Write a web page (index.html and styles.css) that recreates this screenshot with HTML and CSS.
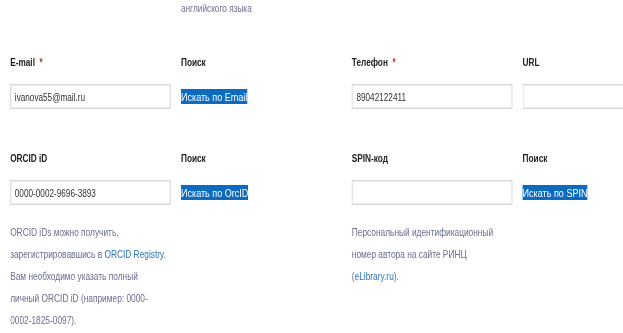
FILE: index.html
```html
<!DOCTYPE html>
<html>
<head>
  <meta charset="utf-8">
  <title>Профиль автора</title>
  <link rel="stylesheet" href="styles.css">
</head>
<body>

  <div class="page">
    <div class="note-row">
      <div></div>
      <div class="note">английского языка</div>
    </div>

    <div class="form-row first">
      <div class="field">
        <label>E-mail <span class="req">*</span></label>
        <input type="text" value="ivanova55@mail.ru">
      </div>
      <div class="field">
        <label>Поиск</label>
        <div class="search"><span class="search-link">Искать по Email</span></div>
      </div>
      <div class="field">
        <label>Телефон <span class="req">*</span></label>
        <input type="text" value="89042122411">
      </div>
      <div class="field">
        <label>URL</label>
        <input type="text" value="">
      </div>
    </div>

    <div class="form-row">
      <div class="field">
        <label>ORCID iD</label>
        <input type="text" value="0000-0002-9696-3893">
        <p class="help">ORCID iDs можно получить, зарегистрировавшись в <a href="#">ORCID Registry</a>. Вам необходимо указать полный личный ORCID iD (например: 0000-<wbr>0002-1825-0097).</p>
      </div>
      <div class="field">
        <label>Поиск</label>
        <div class="search"><span class="search-link">Искать по OrcID</span></div>
      </div>
      <div class="field">
        <label>SPIN-код</label>
        <input type="text" value="">
        <p class="help">Персональный идентификационный номер автора на сайте РИНЦ (<a href="#">eLibrary.ru</a>).</p>
      </div>
      <div class="field">
        <label>Поиск</label>
        <div class="search"><span class="search-link">Искать по SPIN</span></div>
      </div>
    </div>
  </div>

</body>
</html>
```

FILE: styles.css
```css
body {
  margin: 0;
  background-color: #fff;
  font-family: "Liberation Sans", Arial, sans-serif;
  overflow: hidden;
}

/* the source screenshot is squeezed horizontally */
.page {
  width: 800px;
  padding-left: 13px;
  transform: scaleX(0.78);
  transform-origin: 0 0;
}

.note-row,
.form-row {
  display: grid;
  grid-template-columns: repeat(4, 219px);
}

.note {
  font-size: 10.6px;
  line-height: 17px;
  color: #6e7090;
}

.form-row.first {
  margin-top: 38px;
}

.form-row {
  margin-top: 42px;
}

.field label {
  display: block;
  font-size: 10.6px;
  font-weight: bold;
  line-height: 14px;
  color: #222;
  margin-bottom: 15px;
}

.req {
  color: #d21f1f;
  margin-left: 3px;
}

.field input {
  box-sizing: border-box;
  width: 206px;
  height: 25px;
  margin: 0;
  padding: 0 5px;
  border: 1px solid #d6d6d6;
  box-shadow: inset 0 0 0 1px #f1f1f1;
  font-family: inherit;
  font-size: 10.5px;
  color: #333;
  outline: none;
}

.search {
  height: 25px;
  display: flex;
  align-items: center;
}

.search-link {
  font-size: 11.6px;
  line-height: 15px;
  background-color: #0b6bc1;
  color: #fff;
}

.help {
  width: 201px;
  margin: 16px 0 0;
  font-size: 10.7px;
  line-height: 22px;
  color: #6b6d8d;
}

.help a {
  color: #2c73b9;
  text-decoration: none;
}
```
